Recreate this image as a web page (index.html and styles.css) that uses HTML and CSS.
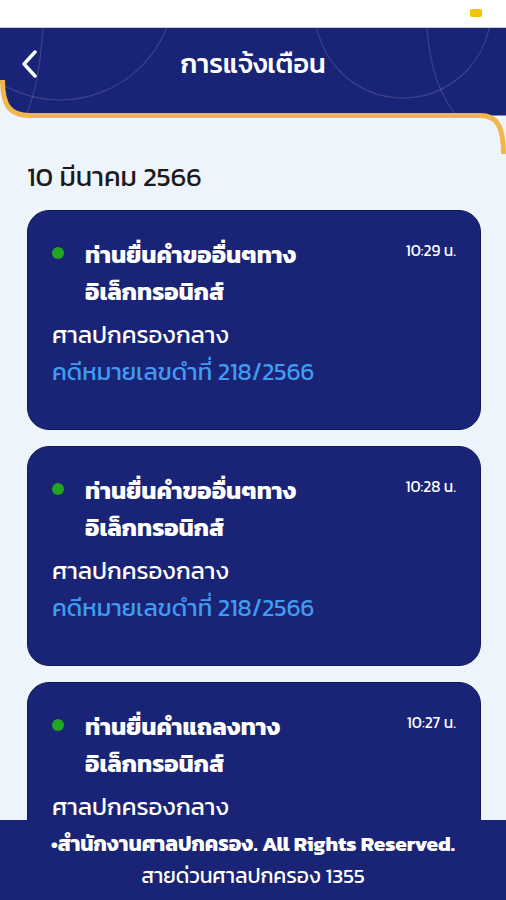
FILE: index.html
```html
<!DOCTYPE html>
<html lang="th">

<head>
    <meta charset="UTF-8">
    <meta name="viewport" content="width=device-width, initial-scale=1.0">
    <title>การแจ้งเตือน</title>
    <link rel="stylesheet" href="styles.css">
</head>

<body>
    <!-- Status bar -->
    <div class="status-bar">
        <span class="battery"></span>
    </div>

    <!-- Header -->
    <header class="top-bar">
        <svg class="top-bar-bg" width="506" height="130" viewBox="0 0 506 130">
            <defs>
                <clipPath id="header-clip">
                    <path d="M0 0 H506 V87.5 H30 C10 87.5 2.5 78 2.5 55 H0 Z" />
                </clipPath>
            </defs>
            <path d="M0 0 H506 V87.5 H30 C10 87.5 2.5 78 2.5 55 H0 Z" fill="#1a2476" />
            <g clip-path="url(#header-clip)" fill="none" stroke="rgba(255,255,255,0.14)" stroke-width="1.2">
                <circle cx="60" cy="-43" r="115" />
                <path d="M43 0 C40 42 35 67 25 90" />
                <circle cx="403" cy="-18" r="88" />
                <path d="M427 0 C430 42 440 67 458 90" />
            </g>
            <path d="M2.5 52 C2.5 78 10 87.5 30 87.5 H480 C497 87.5 503.5 98 503.5 126" fill="none" stroke="#f0b84a" stroke-width="5" />
        </svg>
        <button class="back-btn">
            <svg width="20" height="28" viewBox="0 0 20 28">
                <path d="M15 2 L4 14 L15 26" fill="none" stroke="#fff" stroke-width="3.4" stroke-linecap="round" stroke-linejoin="round" />
            </svg>
        </button>
        <h1 class="page-title">การแจ้งเตือน</h1>
    </header>

    <main class="content">
        <h3 class="date-label">10 มีนาคม 2566</h3>

        <div class="card">
            <div class="card-head">
                <span class="dot"></span>
                <h2 class="card-title">ท่านยื่นคำขออื่นๆทาง<br>อิเล็กทรอนิกส์</h2>
                <span class="time">10:29 น.</span>
            </div>
            <p class="court">ศาลปกครองกลาง</p>
            <p class="case-no">คดีหมายเลขดำที่ 218/2566</p>
        </div>

        <div class="card">
            <div class="card-head">
                <span class="dot"></span>
                <h2 class="card-title">ท่านยื่นคำขออื่นๆทาง<br>อิเล็กทรอนิกส์</h2>
                <span class="time">10:28 น.</span>
            </div>
            <p class="court">ศาลปกครองกลาง</p>
            <p class="case-no">คดีหมายเลขดำที่ 218/2566</p>
        </div>

        <div class="card">
            <div class="card-head">
                <span class="dot"></span>
                <h2 class="card-title">ท่านยื่นคำแถลงทาง<br>อิเล็กทรอนิกส์</h2>
                <span class="time">10:27 น.</span>
            </div>
            <p class="court">ศาลปกครองกลาง</p>
            <p class="case-no">คดีหมายเลขดำที่ 218/2566</p>
        </div>
    </main>

    <!-- Footer -->
    <footer class="footer">
        <p class="copyright">•สำนักงานศาลปกครอง. All Rights Reserved.</p>
        <p class="hotline">สายด่วนศาลปกครอง 1355</p>
    </footer>
</body>

</html>
```

FILE: styles.css
```css
body {
    margin: 0;
    padding: 0;
    width: 506px;
    height: 900px;
    overflow: hidden;
    background-color: #eef4fb;
    font-family: 'Kanit', 'Prompt', 'Noto Sans Thai', 'Noto Sans', 'Noto Sans CJK SC', sans-serif;
}

/* Status bar */
.status-bar {
    height: 27px;
    background-color: #fff;
    border-bottom: 1px solid #c9ccd6;
    position: relative;
}

.battery {
    position: absolute;
    top: 9px;
    left: 470px;
    width: 12px;
    height: 8px;
    border-radius: 2px;
    background-color: #f5c400;
}

/* Header */
.top-bar {
    position: relative;
    height: 90px;
    display: flex;
    align-items: flex-start;
}

.top-bar-bg {
    position: absolute;
    top: 0;
    left: 0;
    overflow: visible;
}

.back-btn {
    position: relative;
    width: 60px;
    height: 72px;
    padding: 0 0 0 20px;
    background: none;
    border: none;
    display: flex;
    align-items: center;
    cursor: pointer;
}

.page-title {
    position: relative;
    flex: 1;
    margin: 0 60px 0 0;
    height: 72px;
    line-height: 72px;
    text-align: center;
    color: #fff;
    font-size: 27px;
    font-weight: 500;
}

/* Content */
.content {
    padding: 43px 25px 0 27px;
}

.date-label {
    margin: 0 0 17px;
    font-size: 27px;
    line-height: 32px;
    font-weight: 400;
    color: #1b1b1b;
}

.card {
    background-color: #1a2476;
    border: 1px solid #121a5c;
    border-radius: 22px;
    padding: 25px 24px 39px;
    margin-bottom: 16px;
    color: #fff;
}

.card-head {
    display: flex;
    align-items: flex-start;
}

.dot {
    width: 12px;
    height: 12px;
    border-radius: 50%;
    background-color: #22a622;
    margin: 11px 21px 0 0;
    flex-shrink: 0;
}

.card-title {
    flex: 1;
    margin: 0;
    font-size: 24px;
    line-height: 37px;
    font-weight: 700;
}

.time {
    font-size: 15.5px;
    line-height: 20px;
    margin-top: 5px;
}

.court {
    margin: 6px 0 0;
    font-size: 24px;
    line-height: 37px;
}

.case-no {
    margin: 0;
    font-size: 24px;
    line-height: 37px;
    color: #3f9cf2;
}

/* Footer */
.footer {
    position: fixed;
    left: 0;
    bottom: 0;
    width: 506px;
    height: 80px;
    background-color: #1a2476;
    color: #fff;
    text-align: center;
    display: flex;
    flex-direction: column;
    justify-content: center;
}

.footer p {
    margin: 0;
    font-size: 21px;
    line-height: 32px;
}

.copyright {
    font-weight: 700;
}
```
